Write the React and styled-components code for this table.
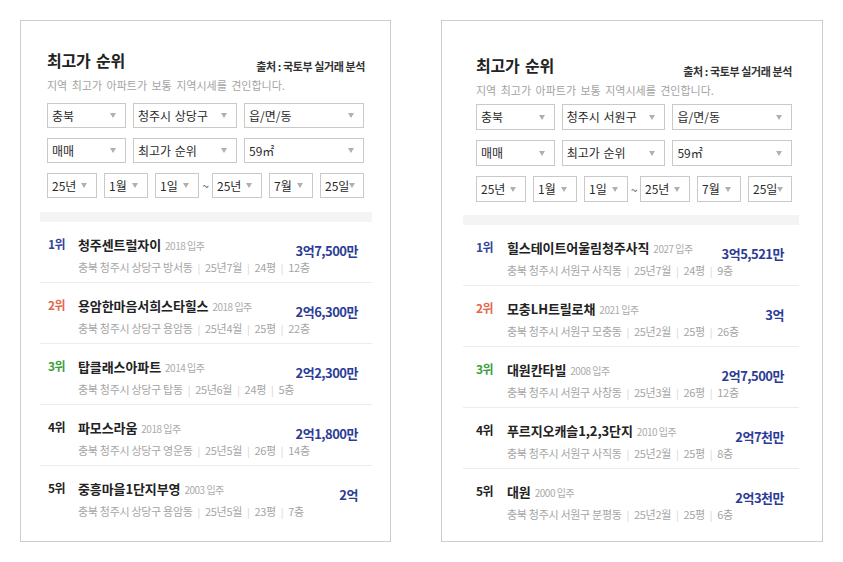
import React from 'react';
import styled, { createGlobalStyle } from 'styled-components';

const panels = [
  {
    id: 'sangdang',
    width: 371,
    headPad: '29px 25px 0 26px',
    filterTop: 6,
    selectHeight: 25,
    bandTop: 14,
    listMargin: '0 18px 0 19px',
    rankPad: 8,
    rankWidth: 30,
    pricePad: 14,
    district: '청주시 상당구',
    items: [
      { name: '청주센트럴자이', year: 2018, dong: '방서동', month: '25년7월', size: '24평', floor: '12층', price: '3억7,500만' },
      { name: '용암한마음서희스타힐스', year: 2018, dong: '용암동', month: '25년4월', size: '25평', floor: '22층', price: '2억6,300만' },
      { name: '탑클래스아파트', year: 2014, dong: '탑동', month: '25년6월', size: '24평', floor: '5층', price: '2억2,300만' },
      { name: '파모스라움', year: 2018, dong: '영운동', month: '25년5월', size: '26평', floor: '14층', price: '2억1,800만' },
      { name: '중흥마을1단지부영', year: 2003, dong: '용암동', month: '25년5월', size: '23평', floor: '7층', price: '2억' },
    ],
  },
  {
    id: 'seowon',
    width: 382,
    headPad: '34px 30px 0 34px',
    filterTop: 2,
    selectHeight: 26,
    bandTop: 13,
    listMargin: '0 23px 0 21px',
    rankPad: 13,
    rankWidth: 31,
    pricePad: 15,
    district: '청주시 서원구',
    items: [
      { name: '힐스테이트어울림청주사직', year: 2027, dong: '사직동', month: '25년7월', size: '24평', floor: '9층', price: '3억5,521만' },
      { name: '모충LH트릴로채', year: 2021, dong: '모충동', month: '25년2월', size: '25평', floor: '26층', price: '3억' },
      { name: '대원칸타빌', year: 2008, dong: '사창동', month: '25년3월', size: '26평', floor: '12층', price: '2억7,500만' },
      { name: '푸르지오캐슬1,2,3단지', year: 2010, dong: '사직동', month: '25년2월', size: '25평', floor: '8층', price: '2억7천만' },
      { name: '대원', year: 2000, dong: '분평동', month: '25년2월', size: '25평', floor: '6층', price: '2억3천만' },
    ],
  },
];

const rankColors = ['#33449c', '#e2674f', '#3c9e3c', '#222', '#222'];

const Select = ({ label, width, height }) => (
  <SelectBox $w={width} $h={height}>
    <SelectText>{label}</SelectText>
    <Arrow />
  </SelectBox>
);

const RankingPanel = ({ panel }) => {
  const h = panel.selectHeight;
  return (
    <Panel $w={panel.width}>
      <Head $pad={panel.headPad}>
        <TitleRow>
          <Title>최고가 순위</Title>
          <Source>출처 : 국토부 실거래 분석</Source>
        </TitleRow>
        <Desc>지역 최고가 아파트가 보통 지역시세를 견인합니다.</Desc>
        <Filters $top={panel.filterTop}>
          <FilterRow>
            <Select label='충북' width={79} height={h} />
            <Select label={panel.district} width={104} height={h} />
            <Select label='읍/면/동' width={120} height={h} />
          </FilterRow>
          <FilterRow>
            <Select label='매매' width={79} height={h} />
            <Select label='최고가 순위' width={104} height={h} />
            <Select label='59㎡' width={120} height={h} />
          </FilterRow>
          <FilterRow>
            <DateGroup>
              <Select label='25년' width={50} height={h} />
              <Select label='1월' width={44} height={h} />
              <Select label='1일' width={44} height={h} />
            </DateGroup>
            <Tilde>~</Tilde>
            <DateGroup>
              <Select label='25년' width={50} height={h} />
              <Select label='7월' width={44} height={h} />
              <Select label='25일' width={44} height={h} />
            </DateGroup>
          </FilterRow>
        </Filters>
      </Head>
      <Band $top={panel.bandTop} $margin={panel.listMargin} />
      <List $margin={panel.listMargin}>
        {panel.items.map((item, i) => (
          <Item key={item.name} $pad={panel.rankPad} $right={panel.pricePad}>
            <Rank $color={rankColors[i]} $w={panel.rankWidth}>
              {i + 1}위
            </Rank>
            <Info>
              <NameLine>
                <Name>{item.name}</Name>
                <Year>{item.year} 입주</Year>
              </NameLine>
              <Sub>
                충북 {panel.district} {item.dong}
                <Sep>|</Sep>
                {item.month}
                <Sep>|</Sep>
                {item.size}
                <Sep>|</Sep>
                {item.floor}
              </Sub>
            </Info>
            <Price>{item.price}</Price>
          </Item>
        ))}
      </List>
    </Panel>
  );
};

const App = () => (
  <>
    <GlobalStyle />
    <Page>
      {panels.map((panel) => (
        <RankingPanel key={panel.id} panel={panel} />
      ))}
    </Page>
  </>
);

const GlobalStyle = createGlobalStyle`
  body {
    margin: 0;
    background: #fff;
    font-family: 'Noto Sans CJK KR', 'Noto Sans', sans-serif;
    color: #222;
  }
`;

const Page = styled.div`
  display: flex;
  align-items: flex-start;
  gap: 50px;
  padding: 20px 0 0 20px;
`;

const Panel = styled.section`
  box-sizing: border-box;
  width: ${(p) => p.$w}px;
  height: 522px;
  border: 1px solid #cdcdcd;
  background: #fff;
`;

const Head = styled.div`
  padding: ${(p) => p.$pad};
`;

const TitleRow = styled.div`
  display: flex;
  justify-content: space-between;
  align-items: flex-end;
  height: 20px;
`;

const Title = styled.h2`
  margin: 0;
  font-size: 16px;
  line-height: 20px;
  font-weight: 700;
  letter-spacing: -0.2px;
  word-spacing: 2px;
  color: #222;
`;

const Source = styled.span`
  margin-bottom: -3px;
  font-size: 11px;
  line-height: 14px;
  font-weight: 700;
  letter-spacing: -0.4px;
  color: #333;
`;

const Desc = styled.p`
  margin: 7px 0 0;
  font-size: 11px;
  line-height: 16px;
  letter-spacing: 0;
  word-spacing: 2px;
  color: #a3a3a3;
`;

const Filters = styled.div`
  display: flex;
  flex-direction: column;
  gap: 10px;
  margin-top: ${(p) => p.$top + 4}px;
`;

const FilterRow = styled.div`
  display: flex;
  align-items: center;
  gap: 7px;
`;

const DateGroup = styled.div`
  display: flex;
  gap: 7px;
`;

const Tilde = styled.span`
  width: 13px;
  margin: 0 -7px;
  text-align: center;
  font-size: 12px;
  color: #555;
`;

const SelectBox = styled.div`
  box-sizing: border-box;
  display: flex;
  align-items: center;
  width: ${(p) => p.$w}px;
  height: ${(p) => p.$h}px;
  padding: 0 9px 0 4px;
  border: 1px solid #c9c9c9;
  background: #fff;
`;

const SelectText = styled.span`
  flex-shrink: 0;
  font-size: 12px;
  line-height: 16px;
  letter-spacing: 0;
  word-spacing: 1px;
  color: #2a2a2a;
  white-space: nowrap;
`;

const Arrow = styled.span`
  flex-shrink: 0;
  margin-left: auto;
  width: 0;
  height: 0;
  border-left: 3px solid transparent;
  border-right: 3px solid transparent;
  border-top: 5px solid #b0b0b0;
`;

const Band = styled.div`
  height: 10px;
  margin: ${(p) => p.$top}px 0 0;
  margin-left: ${(p) => p.$margin.split(' ')[3]};
  margin-right: ${(p) => p.$margin.split(' ')[1]};
  background: #f4f4f4;
`;

const List = styled.ul`
  margin: ${(p) => p.$margin};
  padding: 0;
  list-style: none;
`;

const Item = styled.li`
  display: flex;
  align-items: center;
  height: 60px;
  padding: 0 ${(p) => p.$right}px 0 ${(p) => p.$pad}px;
  border-bottom: 1px solid #ececec;

  &:last-child {
    border-bottom: none;
  }
`;

const Rank = styled.span`
  align-self: flex-start;
  width: ${(p) => p.$w}px;
  padding-top: 14px;
  font-size: 12px;
  line-height: 16px;
  font-weight: 700;
  letter-spacing: -0.5px;
  color: ${(p) => p.$color};
`;

const Info = styled.div`
  flex: 1;
  min-width: 0;
  padding-top: 6px;
`;

const NameLine = styled.div`
  display: flex;
  align-items: baseline;
  gap: 4px;
  height: 18px;
`;

const Name = styled.strong`
  font-size: 13px;
  line-height: 18px;
  font-weight: 700;
  letter-spacing: -0.1px;
  color: #222;
  white-space: nowrap;
`;

const Year = styled.span`
  font-size: 10px;
  line-height: 14px;
  letter-spacing: -0.5px;
  color: #ababab;
`;

const Sub = styled.div`
  margin-top: 6px;
  font-size: 11px;
  line-height: 14px;
  letter-spacing: -0.3px;
  color: #a5a5a5;
  white-space: nowrap;
`;

const Sep = styled.span`
  margin: 0 5px;
  color: #d2d2d2;
  font-size: 10px;
`;

const Price = styled.span`
  flex-shrink: 0;
  margin-top: -2px;
  font-size: 13px;
  line-height: 14px;
  font-weight: 700;
  letter-spacing: -0.5px;
  color: #2c3c96;
`;

export default App;
